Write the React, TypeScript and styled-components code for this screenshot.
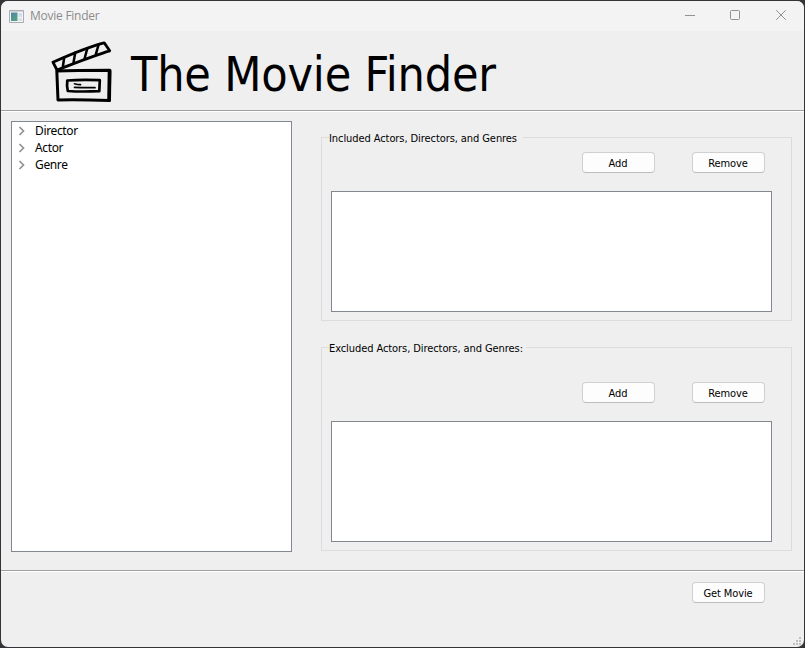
import React from "react";
import styled, { createGlobalStyle } from "styled-components";

const GlobalStyle = createGlobalStyle`
  * { box-sizing: border-box; }
  body { margin: 0; background: #353337; overflow: hidden; }
`;

const uiFont = `"DejaVu Sans Condensed", "DejaVu Sans", sans-serif`;

const Desktop = styled.div`
  width: 805px;
  height: 648px;
  padding: 1px;
  background: #353337;
`;

const Window = styled.main`
  display: flex;
  flex-direction: column;
  width: 803px;
  height: 646px;
  overflow: hidden;
  border-radius: 7px;
  background: #efefef;
  color: #000;
  font-family: ${uiFont};
  font-stretch: condensed;
  font-size: 11px;
`;

const TitleBar = styled.header`
  display: flex;
  align-items: center;
  height: 30px;
  padding-left: 8px;
  background: #f3f3f3;
  color: #8b8b8b;
`;

const WindowTitle = styled.span`
  margin-left: 6px;
  font: 12px/16px "Open Sans", sans-serif;
  letter-spacing: -0.25px;
`;

const Controls = styled.div`
  display: flex;
  margin-left: auto;
  svg { display: block; width: 46px; height: 30px; }
`;

const Banner = styled.section`
  display: flex;
  height: 81px;
  padding-left: 48px;
  border-bottom: 1px solid #fff;
  box-shadow: inset 0 -1px #a0a0a0;
`;

const Heading = styled.h1`
  margin: 14px 0 0 16px;
  font: 400 48px/58px ${uiFont};
  font-stretch: condensed;
  letter-spacing: -0.2px;
  white-space: nowrap;
`;

const Content = styled.section`
  display: flex;
  height: 460px;
  padding: 9px 12px 0 10px;
  border-bottom: 1px solid #fff;
  box-shadow: inset 0 -1px #a0a0a0;
`;

const Tree = styled.ul`
  width: 281px;
  height: 431px;
  margin: 0 29px 0 0;
  padding: 0 0 0 6px;
  list-style: none;
  border: 1px solid #828790;
  background: #fff;
`;

const TreeItem = styled.li`
  display: flex;
  align-items: center;
  height: 17px;
  font: 12px/17px "Noto Sans", sans-serif;
  letter-spacing: -0.35px;
  svg { margin-right: 9px; }
`;

const Groups = styled.div`
  width: 471px;
  padding-top: 9px;
`;

const Group = styled.fieldset<{ $height: number; $gap: number }>`
  height: ${(p) => p.$height}px;
  min-width: 0;
  margin: 0 0 ${(p) => p.$gap}px;
  padding: 0 9px;
  border: 1px solid #dcdcdc;
`;

const Legend = styled.legend<{ $width: number }>`
  width: ${(p) => p.$width}px;
  height: 15px;
  margin-left: -2px;
  padding: 0;
  line-height: 17px;
  letter-spacing: -0.08px;
  white-space: nowrap;
`;

const Actions = styled.div<{ $top: number }>`
  display: flex;
  justify-content: flex-end;
  gap: 37px;
  padding: ${(p) => p.$top}px 17px 0 0;
`;

const Button = styled.button`
  width: 73px;
  height: 21px;
  padding: 1px 1px 0 0;
  border: 1px solid #d0d0d0;
  border-bottom-color: #bdbdbd;
  border-radius: 4px;
  background: #fdfdfd;
  color: #000;
  font: 11px/17px ${uiFont};
  font-stretch: condensed;
  letter-spacing: -0.1px;
`;

const ListBox = styled.div`
  width: 441px;
  height: 121px;
  margin-top: 18px;
  border: 1px solid #828790;
  background: #fff;
`;

const Footer = styled.footer`
  display: flex;
  flex: 1;
  flex-direction: column;
  justify-content: space-between;
  align-items: flex-end;
  padding: 10px 0 0;
  ${Button} { margin-right: 39px; }
`;

const AppIcon = () => (
  <svg width="15" height="13" viewBox="0 0 15 13">
    <defs>
      <linearGradient id="screen" x1="0" y1="0" x2="1" y2="1">
        <stop stopColor="#4f83ae" />
        <stop offset="1" stopColor="#55a875" />
      </linearGradient>
    </defs>
    <path fill="#f4f5f6" stroke="#a9adb3" d="M.5.5h14v12H.5z" />
    <path fill="#d3d6da" d="M1 1h13v1H1z" />
    <path fill="url(#screen)" d="M2 2.5h6.5v8.5H2z" />
    <path fill="#d0def0" d="M9.5 3H13v4H9.500z" />
    <path fill="#dcdfe2" d="M9.5 8H13v3H9.500z" />
  </svg>
);

const Clapper = () => (
  <svg width="66" height="72" viewBox="0 0 66 72" fill="none" stroke="#000" strokeLinecap="round" strokeLinejoin="round">
    <path strokeWidth="2.8" d="M8 39 3.900 31.200C20 24 38 16.200 55.200 11.800L60.700 19.800C44 24.700 25 32.500 8 39" />
    <path strokeWidth="2.500" d="m15.200 26.500-1.300 9M26.300 21.500l-1.800 10M38.300 17.500l-2.700 10M49.500 13.800l-2.600 9.300" />
    <path strokeWidth="3" d="M7.800 40 9 69c16.500-.5 33-.1 51.500.6l.4-30.400C43 39.200 25 39.200 7.800 40Z" />
    <path strokeWidth="3.600" d="m60.500 40-.5 29" />
    <path strokeWidth="2.700" d="M18.300 49.500c-.5 4-.3 7.700.5 10.500 10.500.8 20.400.6 31.500.2l.5-11c-11.500-.6-21.700-.6-32.500.3Z" />
    <path strokeWidth="1.700" d="M25.500 52.800c2.200.7 3.700.9 6 .9M25.500 56.300c7 .2 14 .4 20.500.4" />
  </svg>
);

const App = () => (
  <>
    <GlobalStyle />
    <Desktop>
      <Window>
        <TitleBar>
          <AppIcon />
          <WindowTitle>Movie Finder</WindowTitle>
          <Controls>
            <svg fill="none" stroke="#929292"><path d="M19 14.5h10" /></svg>
            <svg fill="none" stroke="#929292"><rect x="18.5" y="9.5" width="9" height="9" rx="1" /></svg>
            <svg fill="none" stroke="#929292"><path d="m18.200 9.200 9.600 9.600m0-9.600-9.600 9.600" /></svg>
          </Controls>
        </TitleBar>
        <Banner>
          <Clapper />
          <Heading>The Movie Finder</Heading>
        </Banner>
        <Content>
          <Tree>
            {["Director", "Actor", "Genre"].map((name) => (
              <TreeItem key={name}>
                <svg width="8" height="10" viewBox="0 0 8 10" fill="none" stroke="#929292" strokeWidth="1.7">
                  <path d="m1.500 1 4 4-4 4" />
                </svg>
                {name}
              </TreeItem>
            ))}
          </Tree>
          <Groups>
            <Group $height={191} $gap={19}>
              <Legend $width={194}>Included Actors, Directors, and Genres</Legend>
              <Actions $top={7}>
                <Button>Add</Button>
                <Button>Remove</Button>
              </Actions>
              <ListBox />
            </Group>
            <Group $height={211} $gap={0}>
              <Legend $width={197}>Excluded Actors, Directors, and Genres:</Legend>
              <Actions $top={27}>
                <Button>Add</Button>
                <Button>Remove</Button>
              </Actions>
              <ListBox />
            </Group>
          </Groups>
        </Content>
        <Footer>
          <Button>Get Movie</Button>
          <svg width="12" height="11" fill="#bfbfbf">
            <path d="M7 1h2v2H7zM4 4h2v2H4zM7 4h2v2H7zM1 7h2v2H1zM4 7h2v2H4zM7 7h2v2H7z" />
          </svg>
        </Footer>
      </Window>
    </Desktop>
  </>
);

export default App;
